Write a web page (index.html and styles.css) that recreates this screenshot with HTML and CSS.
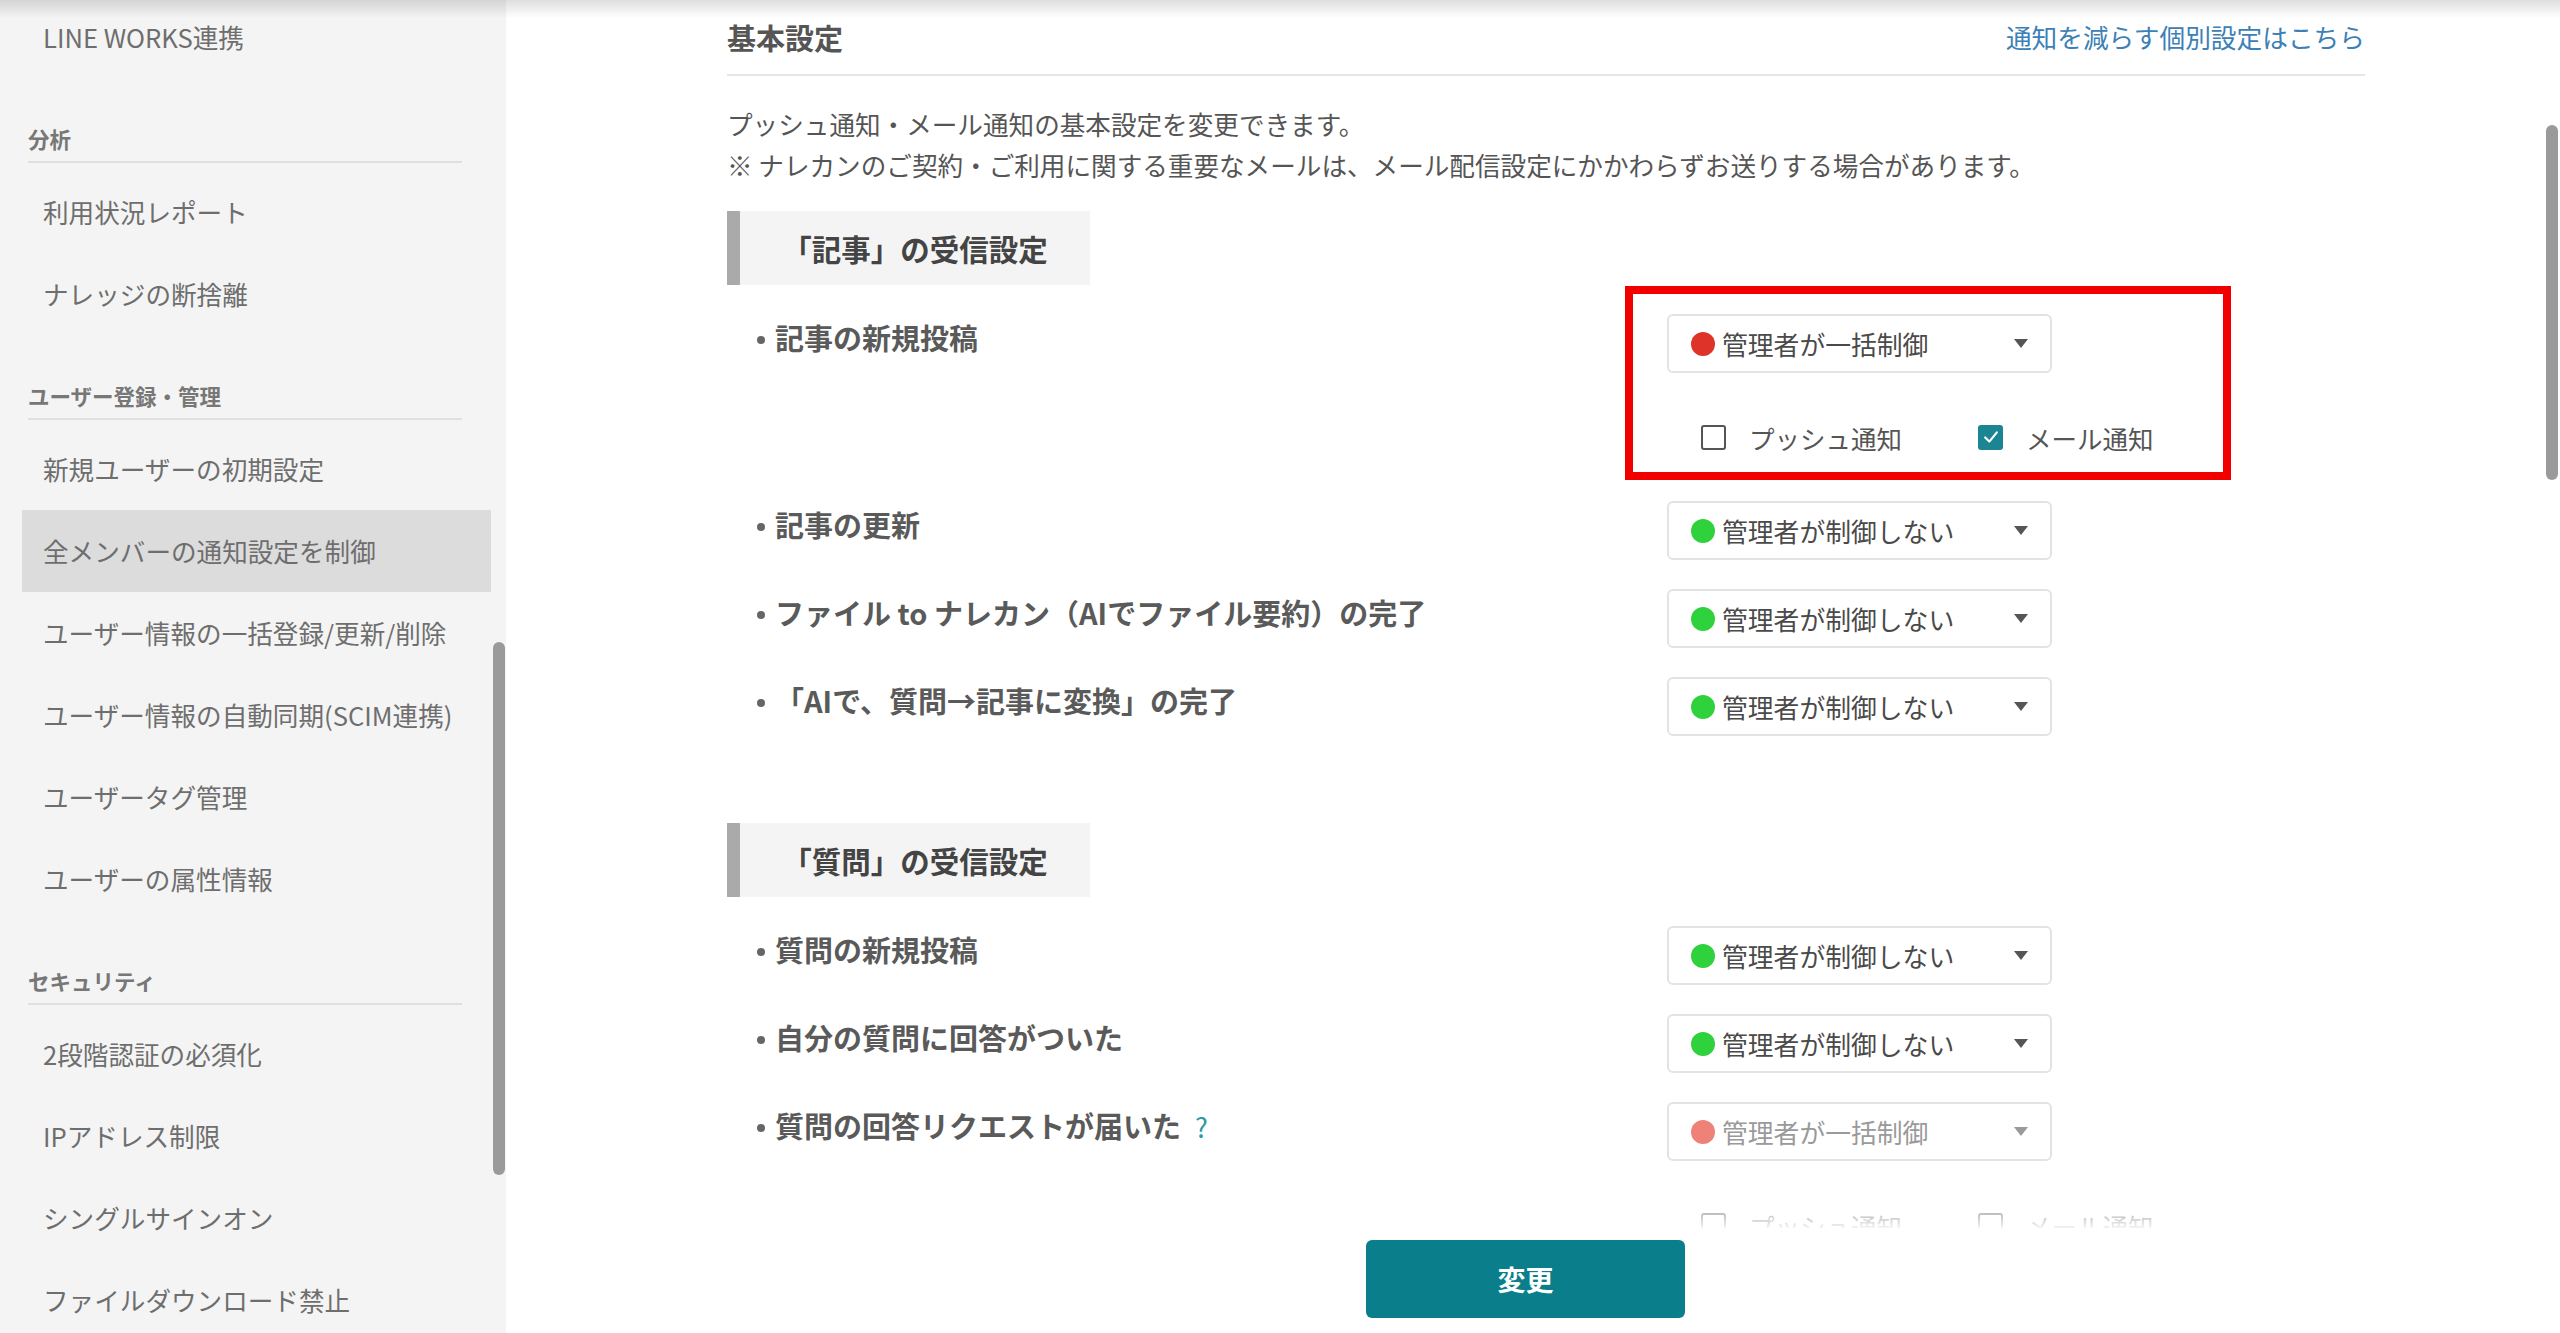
FILE: index.html
```html
<html>

<head>
    <title>通知設定の制御</title>
    <link rel="stylesheet" href="styles.css">
</head>

<body>
    <div class="top-shadow"></div>

    <div class="sidebar">
        <div class="side-item first">LINE WORKS連携</div>

        <div class="side-heading">分析</div>
        <div class="side-item">利用状況レポート</div>
        <div class="side-item">ナレッジの断捨離</div>

        <div class="side-heading">ユーザー登録・管理</div>
        <div class="side-item">新規ユーザーの初期設定</div>
        <div class="side-item active">全メンバーの通知設定を制御</div>
        <div class="side-item">ユーザー情報の一括登録/更新/削除</div>
        <div class="side-item">ユーザー情報の自動同期(SCIM連携)</div>
        <div class="side-item">ユーザータグ管理</div>
        <div class="side-item">ユーザーの属性情報</div>

        <div class="side-heading">セキュリティ</div>
        <div class="side-item">2段階認証の必須化</div>
        <div class="side-item">IPアドレス制限</div>
        <div class="side-item">シングルサインオン</div>
        <div class="side-item">ファイルダウンロード禁止</div>

        <div class="side-thumb"></div>
    </div>

    <div class="main">
        <div class="main-scroll">
            <div class="page-head">
                <h1>基本設定</h1>
                <a class="head-link">通知を減らす個別設定はこちら</a>
            </div>

            <p class="lead">
                プッシュ通知・メール通知の基本設定を変更できます。<br>
                ※ ナレカンのご契約・ご利用に関する重要なメールは、メール配信設定にかかわらずお送りする場合があります。
            </p>

            <!-- 記事 -->
            <div class="group-title">「記事」の受信設定</div>

            <div class="setting-row">
                <div class="setting-label"><span class="dot-bullet"></span>記事の新規投稿</div>
                <div class="setting-control">
                    <div class="select">
                        <span class="status red"></span>管理者が一括制御<span class="caret"></span>
                    </div>
                    <div class="checks">
                        <label class="check-item"><span class="box"></span>プッシュ通知</label>
                        <label class="check-item"><span class="box checked"><svg viewBox="0 0 24 24" width="20" height="20"><polyline points="5,12.5 10,17.5 19,6.5" fill="none" stroke="#fff" stroke-width="2.6" stroke-linecap="round" stroke-linejoin="round" /></svg></span>メール通知</label>
                    </div>
                </div>
            </div>

            <div class="setting-row">
                <div class="setting-label"><span class="dot-bullet"></span>記事の更新</div>
                <div class="setting-control">
                    <div class="select">
                        <span class="status green"></span>管理者が制御しない<span class="caret"></span>
                    </div>
                </div>
            </div>

            <div class="setting-row">
                <div class="setting-label"><span class="dot-bullet"></span>ファイル to ナレカン（AIでファイル要約）の完了</div>
                <div class="setting-control">
                    <div class="select">
                        <span class="status green"></span>管理者が制御しない<span class="caret"></span>
                    </div>
                </div>
            </div>

            <div class="setting-row">
                <div class="setting-label"><span class="dot-bullet"></span>「AIで、質問→記事に変換」の完了</div>
                <div class="setting-control">
                    <div class="select">
                        <span class="status green"></span>管理者が制御しない<span class="caret"></span>
                    </div>
                </div>
            </div>

            <!-- 質問 -->
            <div class="group-title second">「質問」の受信設定</div>

            <div class="setting-row">
                <div class="setting-label"><span class="dot-bullet"></span>質問の新規投稿</div>
                <div class="setting-control">
                    <div class="select">
                        <span class="status green"></span>管理者が制御しない<span class="caret"></span>
                    </div>
                </div>
            </div>

            <div class="setting-row">
                <div class="setting-label"><span class="dot-bullet"></span>自分の質問に回答がついた</div>
                <div class="setting-control">
                    <div class="select">
                        <span class="status green"></span>管理者が制御しない<span class="caret"></span>
                    </div>
                </div>
            </div>

            <div class="setting-row">
                <div class="setting-label"><span class="dot-bullet"></span>質問の回答リクエストが届いた<span class="help">?</span></div>
                <div class="setting-control">
                    <div class="select disabled">
                        <span class="status red"></span>管理者が一括制御<span class="caret"></span>
                    </div>
                    <div class="checks">
                        <label class="check-item"><span class="box"></span>プッシュ通知</label>
                        <label class="check-item"><span class="box"></span>メール通知</label>
                    </div>
                </div>
            </div>

            <!-- annotation -->
            <div class="highlight"></div>
            <div class="fade"></div>
        </div>

        <div class="footer">
            <button class="submit">変更</button>
        </div>

        <div class="main-thumb"></div>
    </div>
</body>

</html>
```

FILE: styles.css
```css
body {
    margin: 0;
    height: 1333px;
    display: flex;
    overflow: hidden;
    background: #ffffff;
    font-family: "Noto Sans CJK JP", "Noto Sans", sans-serif;
    color: #555555;
}

.top-shadow {
    position: fixed;
    top: 0;
    left: 0;
    right: 0;
    height: 18px;
    background: linear-gradient(rgba(0, 0, 0, 0.13), rgba(0, 0, 0, 0));
    z-index: 10;
}

/* sidebar */

.sidebar {
    width: 506px;
    flex-shrink: 0;
    background: #f4f4f4;
    position: relative;
    overflow: hidden;
}

.side-item {
    height: 82px;
    line-height: 82px;
    margin: 0 15px 0 22px;
    padding-left: 21px;
    font-size: 25.6px;
    color: #6e6e6e;
    white-space: nowrap;
}

.side-item.first {
    margin-top: -4px;
}

.side-item.active {
    background: #dcdcdc;
}

.side-heading {
    margin: 46px 44px 8px 28px;
    line-height: 30px;
    padding-bottom: 7px;
    border-bottom: 2px solid #e0e0e0;
    font-size: 21.5px;
    font-weight: 700;
    color: #777777;
}

.side-thumb {
    position: absolute;
    left: 493px;
    top: 642px;
    width: 12px;
    height: 533px;
    border-radius: 6px;
    background: #9a9a9a;
}

/* main */

.main {
    flex: 1;
    position: relative;
    display: flex;
    flex-direction: column;
}

.main-scroll {
    position: relative;
    height: 1228px;
    overflow: hidden;
    padding: 0 195px 0 221px;
}

.page-head {
    display: flex;
    justify-content: space-between;
    align-items: center;
    padding: 15px 0 15px;
    border-bottom: 2px solid #e6e6e6;
}

.page-head h1 {
    margin: 0;
    line-height: 44px;
    font-size: 29px;
    font-weight: 700;
    color: #555555;
}

.head-link {
    font-size: 25.7px;
    line-height: 44px;
    color: #3b80b6;
    cursor: pointer;
}

.lead {
    margin: 27px 0 0;
    font-size: 25.6px;
    line-height: 41px;
    color: #555555;
}

.group-title {
    margin-top: 26px;
    width: 350px;
    height: 74px;
    line-height: 74px;
    border-left: 13px solid #aaaaaa;
    background: #f4f4f4;
    text-align: center;
    font-size: 29.5px;
    font-weight: 700;
    color: #444444;
}

.group-title.second {
    margin-top: 87px;
}

.setting-row {
    display: grid;
    grid-template-columns: 940px 385px;
    margin-top: 29px;
}

.setting-label {
    padding-left: 30px;
    line-height: 46px;
    font-size: 29px;
    font-weight: 700;
    color: #5a5a5a;
    white-space: nowrap;
}

.dot-bullet {
    display: inline-block;
    width: 8px;
    height: 8px;
    border-radius: 50%;
    background: #666666;
    vertical-align: middle;
    margin: -4px 10px 0 0;
}

.help {
    margin-left: 14px;
    font-weight: 400;
    font-size: 27px;
    color: #2a9aa5;
}

.select {
    box-sizing: border-box;
    height: 59px;
    display: flex;
    align-items: center;
    padding: 0 22px;
    border: 2px solid #e3e3e3;
    border-radius: 6px;
    background: #ffffff;
    font-size: 25.8px;
    color: #4a4a4a;
    white-space: nowrap;
}

.status {
    width: 24px;
    height: 24px;
    border-radius: 50%;
    margin-right: 7px;
    flex-shrink: 0;
}

.status.red {
    background: #dd3329;
}

.status.green {
    background: #2fd23c;
}

.caret {
    margin-left: auto;
    width: 0;
    height: 0;
    border-left: 7px solid transparent;
    border-right: 7px solid transparent;
    border-top: 9px solid #555555;
}

.select.disabled {
    color: #9a9a9a;
}

.select.disabled .status.red {
    background: #ee8279;
}

.select.disabled .caret {
    border-top-color: #9a9a9a;
}

.checks {
    display: flex;
    align-items: center;
    height: 40px;
    padding: 44px 0 15px 34px;
}

.check-item {
    display: flex;
    align-items: center;
    flex-shrink: 0;
    gap: 23px;
    font-size: 25.5px;
    color: #555555;
    white-space: nowrap;
}

.check-item:first-child {
    width: 277px;
}

.box {
    box-sizing: border-box;
    width: 25px;
    height: 25px;
    flex-shrink: 0;
    border: 2px solid #555555;
    border-radius: 3px;
    display: flex;
    align-items: center;
    justify-content: center;
}

.box.checked {
    border: none;
    background: #1b8594;
}

.highlight {
    position: absolute;
    left: 1119px;
    top: 286px;
    width: 606px;
    height: 194px;
    box-sizing: border-box;
    border: 8px solid #f20000;
}

.fade {
    position: absolute;
    left: 0;
    right: 0;
    bottom: 0;
    height: 44px;
    background: linear-gradient(rgba(255, 255, 255, 0), rgba(255, 255, 255, 0.93));
}

.footer {
    height: 105px;
    padding-top: 12px;
    box-sizing: border-box;
}

.submit {
    margin-left: 860px;
    width: 319px;
    height: 78px;
    border: none;
    border-radius: 6px;
    background: #0a7f8b;
    color: #ffffff;
    font-family: "Noto Sans CJK JP", "Noto Sans", sans-serif;
    font-size: 28px;
    font-weight: 700;
    cursor: pointer;
}

.main-thumb {
    position: absolute;
    left: 2040px;
    top: 125px;
    width: 12px;
    height: 355px;
    border-radius: 6px;
    background: #9a9a9a;
}
```
